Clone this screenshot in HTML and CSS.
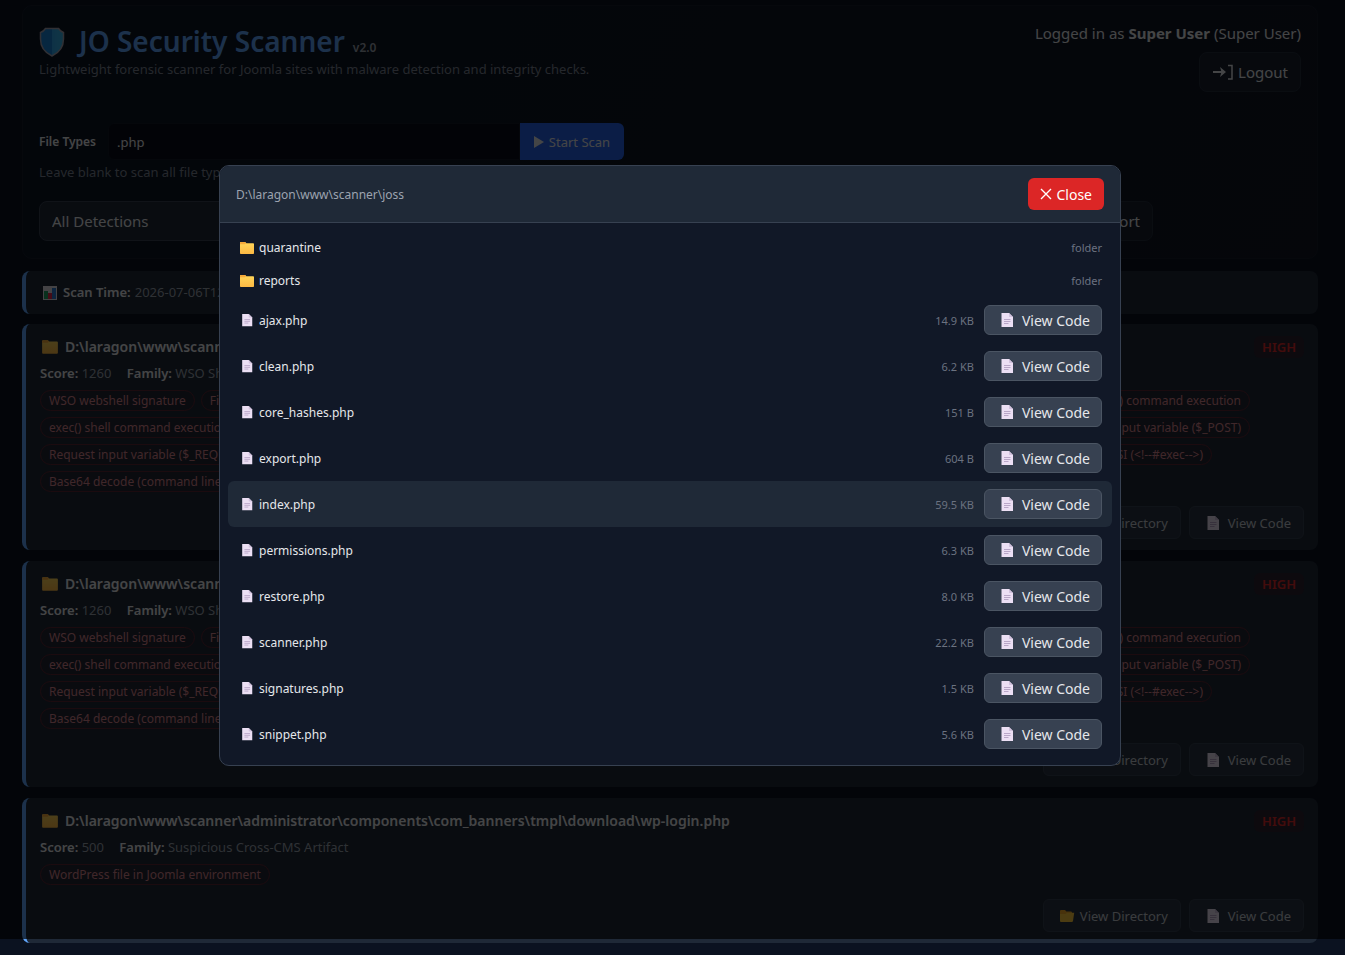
FILE: index.html
```html
<!DOCTYPE html>
<html lang="en">
<head>
    <meta charset="UTF-8">
    <meta name="viewport" content="width=device-width, initial-scale=1.0">
    <title>JO Security Scanner</title>
    <link rel="stylesheet" href="styles.css">
</head>
<body class="modal-open">
    <svg class="sprite" aria-hidden="true">
        <defs>
            <linearGradient id="folder-fill" x1="0" y1="0" x2="0" y2="1">
                <stop offset="0" stop-color="#ffd75a"/>
                <stop offset="1" stop-color="#fdb944"/>
            </linearGradient>
            <linearGradient id="shield-fill" x1="0" y1="0" x2="1" y2="0">
                <stop offset="0" stop-color="#1a83d8"/>
                <stop offset="0.5" stop-color="#1a83d8"/>
                <stop offset="0.5" stop-color="#2fa5ea"/>
                <stop offset="1" stop-color="#38b6e8"/>
            </linearGradient>
        </defs>
        <symbol id="icon-folder" viewBox="0 0 16 14">
            <path d="M1 1.8Q1 1 1.8 1H6L7.4 2.2H14.2Q15 2.2 15 3V12.2Q15 13 14.2 13H1.8Q1 13 1 12.2Z" fill="url(#folder-fill)"/>
            <path d="M1 1.8Q1 1 1.8 1H6L7.2 2.1 6 3.2H1Z" fill="#f5a93a"/>
        </symbol>
        <symbol id="icon-open" viewBox="0 0 16 14">
            <path d="M1 2Q1 1 2 1H6L7.4 2.6H11.800Q13 2.6 13 3.8V12H1Z" fill="#f0a92a"/>
            <path d="M8 3.800H15.200L14 12Q13.800 13 12.800 13H2Q1 13 1 12V5H6.600Z" fill="#ffc83d"/>
        </symbol>
        <symbol id="icon-doc" viewBox="0 0 14 16">
            <path d="M1.500 1H9L13 5V15H1.500Z" fill="#ecdff4"/>
            <path d="M9 1V5H13Z" fill="#d3c3df"/>
            <path d="M4 7.500H10.500M4 9.500H10.500M4 11.500H8.500" stroke="#b9a6c8" stroke-width="1"/>
        </symbol>
        <symbol id="icon-shield" viewBox="0 0 26 30">
            <path d="M6.500 1.500H19.500Q21.500 4.500 24.500 5.500V12C24.500 19 20.500 25.500 13 29 5.500 25.500 1.500 19 1.500 12V5.500Q4.500 4.500 6.500 1.500Z" fill="url(#shield-fill)" stroke="#a3a0ad" stroke-width="1.500"/>
        </symbol>
        <symbol id="icon-chart" viewBox="0 0 16 16">
            <rect x="1" y="1" width="14" height="14" fill="#e3dfe8"/>
            <rect x="2" y="6" width="4" height="8" fill="#1fa467"/>
            <rect x="6" y="8" width="4" height="6" fill="#e8294b"/>
            <rect x="10" y="3" width="4" height="11" fill="#2d7dd2"/>
        </symbol>
    </svg>

    <main class="page">
        <header class="panel">
            <div class="panel-top">
                <div>
                    <h1><svg class="shield"><use href="#icon-shield"/></svg>JO Security Scanner <small>v2.0</small></h1>
                    <p class="subtitle">Lightweight forensic scanner for Joomla sites with malware detection and integrity checks.</p>
                </div>
                <div class="user">
                    <span>Logged in as <b>Super User</b> (Super User)</span>
                    <button class="btn-dark">
                        <svg class="arrow" viewBox="0 0 22 16" fill="none" stroke="currentColor" stroke-width="2"><path d="M1 8H12"/><path d="M8 3L14 8 8 13 9.500 8Z" fill="currentColor" stroke="none"/><path d="M16 1.500H20V15H16" stroke-width="1.500"/></svg>
                        Logout
                    </button>
                </div>
            </div>
            <form class="scan-form">
                <label for="types">File Types</label>
                <input type="text" id="types" value=".php">
                <button type="button" class="btn-scan"><svg class="play" viewBox="0 0 10 12"><path d="M0 0L10 6 0 12Z" fill="currentColor"/></svg>Start Scan</button>
            </form>
            <p class="hint">Leave blank to scan all file types.</p>
            <div class="filters">
                <select aria-label="Detections"><option>All Detections</option></select>
                <button class="btn-dark">Export Report</button>
            </div>
        </header>

        <section class="card summary">
            <svg class="chart"><use href="#icon-chart"/></svg>
            <b>Scan Time:</b> 2026-07-06T12:30:00
        </section>

        <article class="card">
            <div class="card-head">
                <h2><svg class="folder-lg"><use href="#icon-folder"/></svg>D:\laragon\www\scanner\joss\scanner.php</h2>
                <span class="badge">HIGH</span>
            </div>
            <p class="meta"><b>Score:</b> 1260 <b class="family">Family:</b> WSO Shell</p>
            <div class="tags">
                <span>WSO webshell signature</span><span>FilesMan shell signature</span><span class="end">system() command execution</span>
            </div>
            <div class="tags">
                <span>exec() shell command execution</span><span class="end">Input variable ($_POST)</span>
            </div>
            <div class="tags short">
                <span>Request input variable ($_REQUEST)</span><span class="end">SSI (&lt;!--#exec--&gt;)</span>
            </div>
            <div class="tags">
                <span>Base64 decode (command line)</span>
            </div>
            <div class="actions">
                <button><svg class="open"><use href="#icon-open"/></svg>View Directory</button>
                <button><svg class="doc-lg"><use href="#icon-doc"/></svg>View Code</button>
            </div>
        </article>

        <article class="card">
            <div class="card-head">
                <h2><svg class="folder-lg"><use href="#icon-folder"/></svg>D:\laragon\www\scanner\joss\signatures.php</h2>
                <span class="badge">HIGH</span>
            </div>
            <p class="meta"><b>Score:</b> 1260 <b class="family">Family:</b> WSO Shell</p>
            <div class="tags">
                <span>WSO webshell signature</span><span>FilesMan shell signature</span><span class="end">system() command execution</span>
            </div>
            <div class="tags">
                <span>exec() shell command execution</span><span class="end">Input variable ($_POST)</span>
            </div>
            <div class="tags short">
                <span>Request input variable ($_REQUEST)</span><span class="end">SSI (&lt;!--#exec--&gt;)</span>
            </div>
            <div class="tags">
                <span>Base64 decode (command line)</span>
            </div>
            <div class="actions">
                <button><svg class="open"><use href="#icon-open"/></svg>View Directory</button>
                <button><svg class="doc-lg"><use href="#icon-doc"/></svg>View Code</button>
            </div>
        </article>

        <article class="card">
            <div class="card-head">
                <h2><svg class="folder-lg"><use href="#icon-folder"/></svg>D:\laragon\www\scanner\administrator\components\com_banners\tmpl\download\wp-login.php</h2>
                <span class="badge">HIGH</span>
            </div>
            <p class="meta"><b>Score:</b> 500 <b class="family">Family:</b> Suspicious Cross-CMS Artifact</p>
            <div class="tags">
                <span>WordPress file in Joomla environment</span>
            </div>
            <div class="actions">
                <button><svg class="open"><use href="#icon-open"/></svg>View Directory</button>
                <button><svg class="doc-lg"><use href="#icon-doc"/></svg>View Code</button>
            </div>
        </article>
    </main>

    <div class="overlay">
        <div class="modal" role="dialog" aria-modal="true" aria-labelledby="modal-path">
            <div class="modal-head">
                <span id="modal-path">D:\laragon\www\scanner\joss</span>
                <button class="btn-close"><svg class="cross" viewBox="0 0 12 12"><path d="M1 1L11 11M11 1L1 11" stroke="currentColor" stroke-width="1.400"/></svg>Close</button>
            </div>
            <ul class="files">
                <li><svg class="icon"><use href="#icon-folder"/></svg><span class="name">quarantine</span><span class="size">folder</span></li>
                <li><svg class="icon"><use href="#icon-folder"/></svg><span class="name">reports</span><span class="size">folder</span></li>
                <li><svg class="icon"><use href="#icon-doc"/></svg><span class="name">ajax.php</span><span class="size">14.9 KB</span><button><svg class="doc-lg"><use href="#icon-doc"/></svg>View Code</button></li>
                <li><svg class="icon"><use href="#icon-doc"/></svg><span class="name">clean.php</span><span class="size">6.2 KB</span><button><svg class="doc-lg"><use href="#icon-doc"/></svg>View Code</button></li>
                <li><svg class="icon"><use href="#icon-doc"/></svg><span class="name">core_hashes.php</span><span class="size">151 B</span><button><svg class="doc-lg"><use href="#icon-doc"/></svg>View Code</button></li>
                <li><svg class="icon"><use href="#icon-doc"/></svg><span class="name">export.php</span><span class="size">604 B</span><button><svg class="doc-lg"><use href="#icon-doc"/></svg>View Code</button></li>
                <li class="active"><svg class="icon"><use href="#icon-doc"/></svg><span class="name">index.php</span><span class="size">59.5 KB</span><button><svg class="doc-lg"><use href="#icon-doc"/></svg>View Code</button></li>
                <li><svg class="icon"><use href="#icon-doc"/></svg><span class="name">permissions.php</span><span class="size">6.3 KB</span><button><svg class="doc-lg"><use href="#icon-doc"/></svg>View Code</button></li>
                <li><svg class="icon"><use href="#icon-doc"/></svg><span class="name">restore.php</span><span class="size">8.0 KB</span><button><svg class="doc-lg"><use href="#icon-doc"/></svg>View Code</button></li>
                <li><svg class="icon"><use href="#icon-doc"/></svg><span class="name">scanner.php</span><span class="size">22.2 KB</span><button><svg class="doc-lg"><use href="#icon-doc"/></svg>View Code</button></li>
                <li><svg class="icon"><use href="#icon-doc"/></svg><span class="name">signatures.php</span><span class="size">1.5 KB</span><button><svg class="doc-lg"><use href="#icon-doc"/></svg>View Code</button></li>
                <li><svg class="icon"><use href="#icon-doc"/></svg><span class="name">snippet.php</span><span class="size">5.6 KB</span><button><svg class="doc-lg"><use href="#icon-doc"/></svg>View Code</button></li>
            </ul>
        </div>
    </div>
</body>
</html>
```
FILE: styles.css
```css
* {
    box-sizing: border-box;
}
body {
    margin: 0;
    font-family: "Segoe UI", "Noto Sans", sans-serif;
    font-size: 13px;
    line-height: 17px;
    color: #e5e7eb;
    background-color: #0b1220;
}
body.modal-open {
    height: 100vh;
    overflow: hidden;
}
button, input, select {
    font-family: inherit;
    color: inherit;
}
button {
    display: inline-flex;
    align-items: center;
    justify-content: center;
    white-space: nowrap;
    cursor: pointer;
}
h1, h2, p, ul {
    margin: 0;
    padding: 0;
}
svg {
    flex: none;
}
.sprite {
    position: absolute;
    width: 0;
    height: 0;
}
.page {
    display: flex;
    flex-direction: column;
    padding: 5px 27px 0 22px;
}

/* header */
.panel {
    padding: 16px 16px 17px;
    margin-bottom: 12px;
    background: linear-gradient(120deg, #0b1424, #111522);
    border: 1px solid #161d2b;
    border-radius: 10px;
}
.panel-top {
    display: flex;
    justify-content: space-between;
    height: 101px;
}
h1 {
    display: flex;
    align-items: baseline;
    font-size: 28px;
    font-weight: 600;
    line-height: 39px;
    color: #60a5fa;
}
.shield {
    width: 26px;
    height: 30px;
    margin-right: 14px;
    align-self: center;
}
h1 small {
    margin-left: 8px;
    font-size: 12px;
    line-height: 17px;
    color: #9ca3af;
}
.subtitle, .hint {
    color: #7c8493;
}
.user {
    display: flex;
    flex-direction: column;
    align-items: flex-end;
    gap: 8px;
    font-size: 15px;
    line-height: 22px;
}
.btn-dark, select {
    height: 40px;
    padding: 0 12px;
    font-size: 15px;
    background-color: #1f2937;
    border: 1px solid #374151;
    border-radius: 8px;
}
.user .btn-dark, .filters .btn-dark {
    background-color: #18202e;
    border-color: #222c3b;
}
.arrow {
    width: 22px;
    height: 16px;
    margin-right: 4px;
}
.scan-form {
    display: flex;
    align-items: center;
}
.scan-form label {
    width: 69px;
    font-size: 12px;
    font-weight: 600;
}
.scan-form input {
    width: 412px;
    height: 37px;
    padding: 0 8px;
    font-size: 13px;
    background-color: #080d18;
    border: 1px solid #111827;
    border-radius: 6px 0 0 6px;
}
.btn-scan {
    width: 104px;
    height: 37px;
    font-size: 13px;
    background-color: #2563eb;
    border: 0;
    border-radius: 0 6px 6px 0;
}
.play {
    width: 10px;
    height: 12px;
    margin-right: 5px;
}
.hint {
    margin: 4px 0 20px;
}
.filters {
    display: flex;
    justify-content: space-between;
    max-width: 1114px;
}
.filters select {
    width: 220px;
    appearance: none;
}

/* results */
.card {
    min-height: 43px;
    margin-bottom: 11px;
    padding: 11px 14px;
    color: #9ca3af;
    background-color: #1f2937;
    border-left: 4px solid #60a5fa;
    border-radius: 8px;
}
.card b, .card h2 {
    font-weight: 600;
    color: #e5e7eb;
}
.summary {
    display: flex;
    align-items: center;
    gap: 4px;
    margin-bottom: 10px;
}
.chart {
    width: 16px;
    height: 16px;
    margin: 0 1px 0 2px;
}
.card-head {
    display: flex;
    align-items: center;
    justify-content: space-between;
}
.card h2 {
    display: flex;
    align-items: center;
    font-size: 14px;
    line-height: 24px;
}
.folder-lg {
    width: 18px;
    height: 16px;
    margin: 0 6px 0 1px;
}
.badge {
    padding: 2px 8px;
    font-size: 13px;
    font-weight: 600;
    line-height: 18px;
    color: #e02a2a;
    background-color: #2e2231;
    border-radius: 6px;
}
.meta {
    margin: 6px 0 8px;
}
.family {
    margin-left: 12px;
}
.tags {
    display: flex;
    gap: 6px;
    max-width: 1210px;
    margin-bottom: 6px;
}
.tags.short {
    max-width: 1172px;
}
.tags span {
    padding: 0 8px;
    font-size: 12px;
    line-height: 19px;
    color: #d4848c;
    background-color: #242534;
    border: 1px solid #5c2634;
    border-radius: 11px;
}
.tags .end {
    margin-left: auto;
}
.actions {
    display: flex;
    justify-content: flex-end;
    gap: 8px;
    margin-top: 14px;
}
.actions button {
    height: 33px;
    padding: 0 12px;
    font-size: 13px;
    color: #c3c8d0;
    background-color: #2a3545;
    border: 1px solid #354050;
    border-radius: 6px;
}
.doc-lg {
    width: 14px;
    height: 16px;
    margin: 0 8px 0 4px;
}
.open {
    width: 16px;
    height: 14px;
    margin: 0 5px 0 3px;
}

/* directory browser */
.overlay {
    position: fixed;
    inset: 0 0 16px;
    display: flex;
    align-items: center;
    justify-content: center;
    padding: 0 5px 8px 0;
    background-color: rgba(0, 0, 0, 0.7);
}
.modal {
    width: 90%;
    max-width: 902px;
    overflow: hidden;
    background-color: #111827;
    border: 1px solid #374151;
    border-radius: 10px;
}
.modal-head {
    display: flex;
    align-items: center;
    justify-content: space-between;
    padding: 12px 16px;
    font-size: 12px;
    color: #9ca3af;
    background-color: #1f2937;
    border-bottom: 1px solid #374151;
}
.btn-close {
    height: 32px;
    padding: 0 12px;
    font-size: 14px;
    color: #fff;
    background-color: #dc2626;
    border: 0;
    border-radius: 6px;
}
.cross {
    width: 12px;
    height: 12px;
    margin-right: 4px;
}
.files {
    padding: 8px;
    list-style: none;
}
.files li {
    display: flex;
    align-items: center;
    padding: 8px 10px;
    border-radius: 6px;
}
.files li.active {
    background-color: #1f2937;
}
.icon {
    width: 16px;
    height: 14px;
    margin: 0 4px 0 1px;
}
.name {
    flex: 1;
    font-size: 12px;
}
.size {
    font-size: 11px;
    color: #6b7280;
}
.files button {
    height: 30px;
    margin-left: 10px;
    padding: 0 11px;
    font-size: 14px;
    background-color: #374151;
    border: 1px solid #4b5563;
    border-radius: 6px;
}
```
